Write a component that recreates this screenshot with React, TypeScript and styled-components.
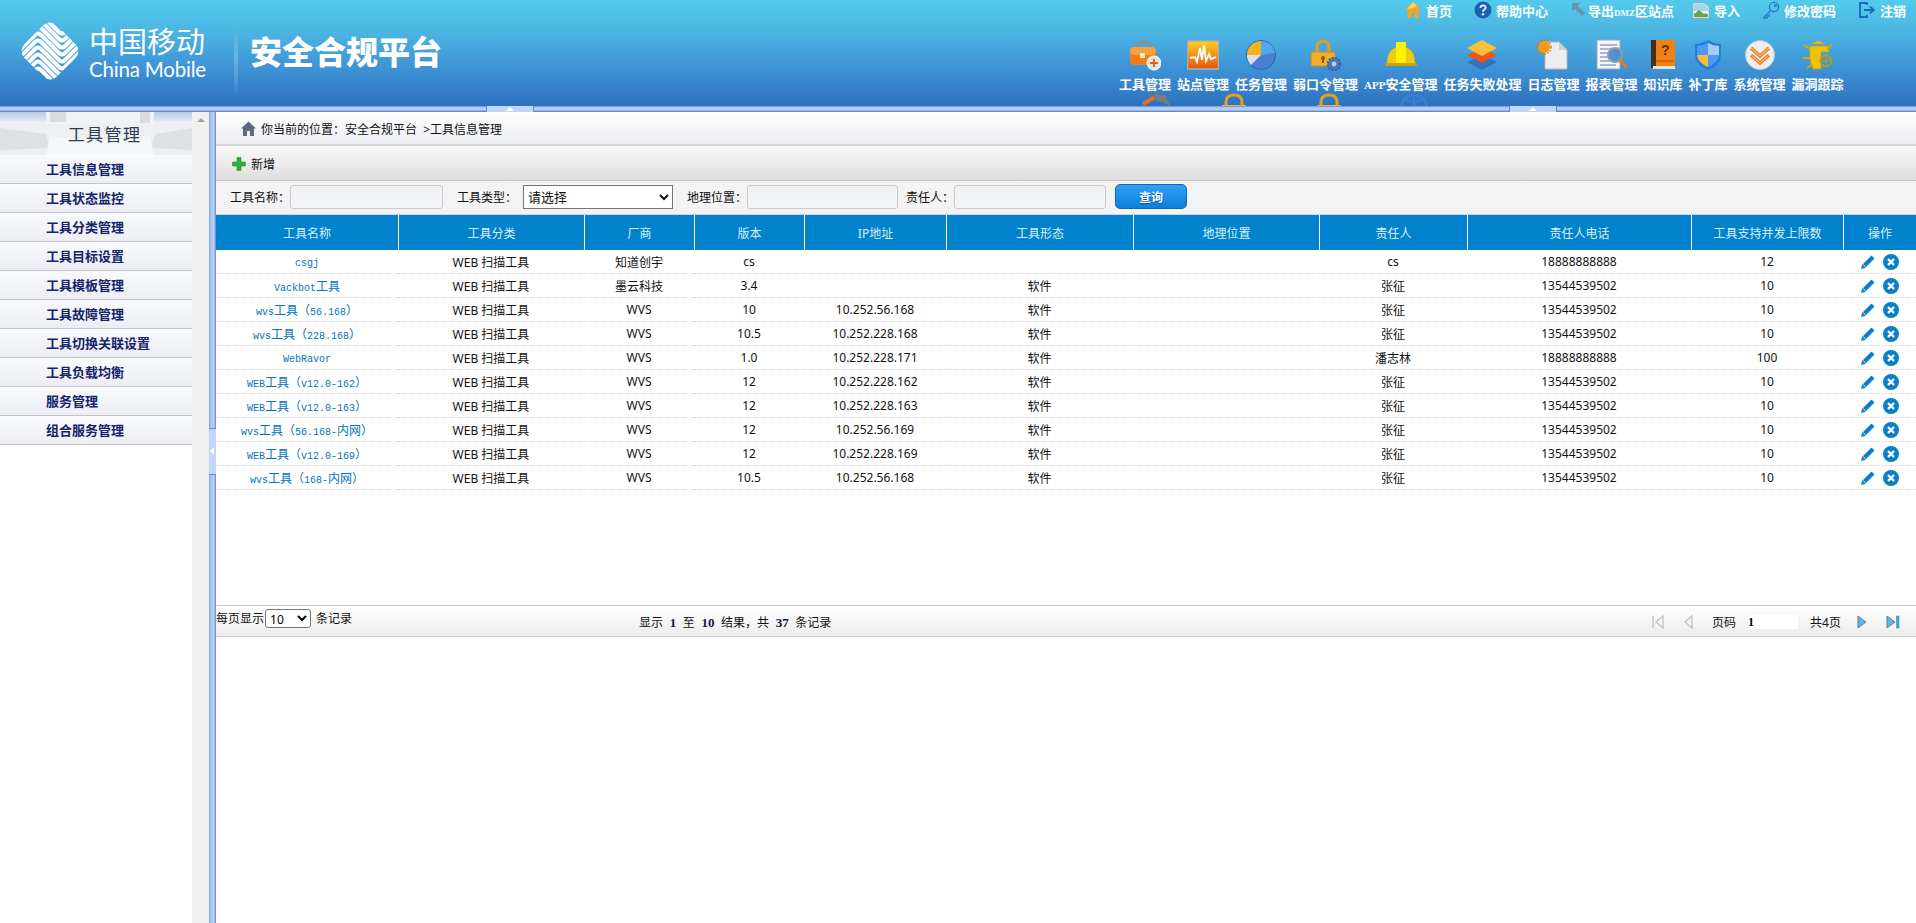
import React from "react";
import styled, { createGlobalStyle } from "styled-components";

const CJK = `"Noto Sans", "Noto Sans CJK SC", sans-serif`;

const Global = createGlobalStyle`
  html, body { margin: 0; padding: 0; height: 100%; overflow: hidden; background: #fff; }
  body { font-family: ${CJK}; font-size: 12px; color: #111; }
  * { box-sizing: border-box; }
`;

const Page = styled.div`
  display: flex;
  flex-direction: column;
  width: 1916px;
  height: 923px;
  overflow: hidden;
`;

const Header = styled.header`
  display: flex;
  justify-content: space-between;
  height: 106px;
  flex: none;
  overflow: hidden;
  background: linear-gradient(180deg, #53cbec 0%, #4bb5e3 30%, #3f95d6 62%, #2f70bf 100%);
`;

const Brand = styled.div`
  display: flex;
  align-items: flex-start;
`;

const LogoMark = styled.svg`
  width: 60px;
  height: 60px;
  margin: 21px 0 0 20px;
  flex: none;
`;

const LogoWords = styled.div`
  display: flex;
  flex-direction: column;
  margin: 23px 0 0 9px;
  width: 118px;
  color: #fff;
`;

const LogoCn = styled.div`
  font-family: "Noto Sans CJK SC", sans-serif;
  font-weight: 400;
  font-size: 29px;
  line-height: 34px;
  white-space: nowrap;
`;

const LogoEn = styled.div`
  font-family: Lato, sans-serif;
  font-weight: 400;
  font-size: 20.5px;
  line-height: 24px;
  letter-spacing: -0.2px;
  white-space: nowrap;
`;

const BrandDivider = styled.div`
  width: 4px;
  height: 68px;
  margin: 28px 0 0 27px;
  background: linear-gradient(180deg, rgba(255,255,255,0), rgba(255,255,255,.22) 40%, rgba(255,255,255,.12) 80%, rgba(255,255,255,0));
`;

const Title = styled.h1`
  margin: 28px 0 0 12px;
  font-family: "Noto Sans CJK SC", sans-serif;
  font-size: 32px;
  line-height: 44px;
  font-weight: 900;
  color: #fff;
  white-space: nowrap;
`;

const HeaderRight = styled.div`
  display: flex;
  flex-direction: column;
  align-items: flex-start;
  width: 800px;
`;

const TopLinks = styled.div`
  display: flex;
  align-self: flex-end;
  gap: 22px;
  height: 20px;
  padding-right: 10px;
`;

const TopLink = styled.a<{ $tight?: boolean }>`
  display: flex;
  align-items: center;
  gap: ${(p) => (p.$tight ? 0 : 4)}px;
  margin-right: ${(p) => (p.$tight ? -4 : 0)}px;
  height: 20px;
  font-size: 13px;
  font-weight: 700;
  color: #fff;
  white-space: nowrap;
  font-family: "Noto Sans CJK SC", sans-serif;
`;

const SmallLatin = styled.span<{ $size: number }>`
  font-family: "Liberation Serif", serif;
  font-size: ${(p) => p.$size}px;
`;

const TopIcon = styled.svg`
  width: 18px;
  height: 18px;
  flex: none;
`;

const Nav = styled.nav`
  display: flex;
  gap: 6px;
  margin: 19px 0 0 3px;
`;

const NavItem = styled.a`
  display: flex;
  flex-direction: column;
  align-items: center;
  color: #fff;
  font-family: "Noto Sans CJK SC", sans-serif;
  font-size: 13px;
  font-weight: 700;
  line-height: 18px;
  white-space: nowrap;
`;

const NavIcon = styled.svg`
  width: 32px;
  height: 32px;
  margin-bottom: 4px;
`;

const PeekRow = styled.div`
  display: flex;
  margin-top: -1px;
`;

const Peek = styled.svg<{ $left: number }>`
  width: 30px;
  height: 30px;
  margin-left: ${(p) => p.$left}px;
  flex: none;
`;

const HBar = styled.div`
  position: relative;
  height: 6px;
  flex: none;
  background: linear-gradient(180deg, #7e9fdd 0, #7e9fdd 1px, #a9c8f5 1px, #b4d0f7 4px, #7d97d6 5px, #5f6fae 6px);
`;

const HHandle = styled.div<{ $left: number }>`
  position: absolute;
  top: 0;
  left: ${(p) => p.$left}px;
  width: 48px;
  height: 6px;
  background: #c0d6f7;
  border-left: 1px solid #6f86c6;
  border-right: 1px solid #6f86c6;
  &::after {
    content: "";
    position: absolute;
    left: 19px;
    top: 1px;
    border-left: 4px solid transparent;
    border-right: 4px solid transparent;
    border-bottom: 4px solid #fff;
  }
`;

const Body = styled.div`
  display: flex;
  flex: 1;
  min-height: 0;
`;

const Sidebar = styled.aside`
  width: 192px;
  flex: none;
  background: #fff;
`;

const SideTitle = styled.div`
  position: relative;
  height: 43px;
  display: flex;
  align-items: center;
  justify-content: center;
  overflow: hidden;
  background: #f2f4f7;
  font-family: "Noto Sans CJK SC", sans-serif;
  font-size: 17px;
  letter-spacing: 1.4px;
  color: #2c3c55;
`;

const SideArt = styled.svg`
  position: absolute;
  inset: 0;
  width: 192px;
  height: 43px;
`;

const SideTitleText = styled.span`
  position: relative;
  margin-top: -1px;
  padding-left: 17px;
`;

const SideItem = styled.a`
  display: block;
  height: 29px;
  padding-left: 46px;
  line-height: 27px;
  font-size: 13px;
  font-weight: 700;
  font-family: "Noto Sans CJK SC", sans-serif;
  color: #14236a;
  background: linear-gradient(180deg, #f9fafe, #eceef3);
  border-bottom: 1px solid #c4c4c8;
`;

const ScrollStrip = styled.div`
  width: 17px;
  flex: none;
  background: #f0f0f0;
  display: flex;
  justify-content: center;
  padding-top: 6px;
`;

const ScrollUp = styled.div`
  width: 0;
  height: 0;
  border-left: 4px solid transparent;
  border-right: 4px solid transparent;
  border-bottom: 4px solid #a3a3a3;
`;

const VBar = styled.div`
  position: relative;
  width: 7px;
  flex: none;
  background: linear-gradient(90deg, #7e9fdd 0, #a9c8f5 2px, #b4d0f7 5px, #6a7cc0 7px);
`;

const VHandle = styled.div`
  position: absolute;
  top: 316px;
  left: 0;
  width: 7px;
  height: 47px;
  background: #c0d6f7;
  border-top: 1px solid #6f86c6;
  border-bottom: 1px solid #6f86c6;
  &::after {
    content: "";
    position: absolute;
    left: 1px;
    top: 18px;
    border-top: 4px solid transparent;
    border-bottom: 4px solid transparent;
    border-right: 4px solid #fff;
  }
`;

const Content = styled.main`
  flex: 1;
  min-width: 0;
  display: flex;
  flex-direction: column;
`;

const Crumbs = styled.div`
  display: flex;
  align-items: center;
  gap: 5px;
  height: 34px;
  flex: none;
  padding: 1px 0 0 25px;
  background: linear-gradient(180deg, #fff, #ecedf1);
  border-bottom: 2px solid #d6d6d9;
  font-size: 12px;
  white-space: pre;
`;

const HomeIcon = styled.svg`
  width: 15px;
  height: 15px;
`;

const Toolbar = styled.div`
  display: flex;
  align-items: center;
  gap: 5px;
  height: 35px;
  flex: none;
  padding: 1px 0 0 16px;
  background: linear-gradient(180deg, #f8f8f8, #dedede);
  border-bottom: 1px solid #c9c9c9;
`;

const PlusIcon = styled.svg`
  width: 14px;
  height: 14px;
`;

const SearchRow = styled.form`
  display: flex;
  align-items: center;
  height: 34px;
  flex: none;
  margin: 0;
  padding: 0 0 1px 14px;
  background: #f3f3f3;
  border-bottom: 1px solid #d4d4d4;
`;

const Field = styled.label<{ $ml: number; $gap?: number }>`
  display: flex;
  align-items: center;
  gap: ${(p) => p.$gap ?? 0}px;
  margin-left: ${(p) => p.$ml}px;
  white-space: nowrap;
  font-size: 12px;
`;

const TextInput = styled.input<{ $w: number }>`
  width: ${(p) => p.$w}px;
  height: 24px;
  margin: 0;
  padding: 0 4px;
  background: linear-gradient(180deg, #eff0f3, #f4f5f8);
  border: 1px solid #c9c9c9;
  border-radius: 3px;
`;

const TypeSelect = styled.select`
  width: 150px;
  height: 24px;
  margin: 0;
  background: #fff;
  font-family: ${CJK};
  font-size: 13px;
  color: #111;
  border: 1px solid #767676;
`;

const QueryButton = styled.button`
  width: 72px;
  height: 25px;
  margin: -1px 0 0 9px;
  padding: 0;
  font-family: "Noto Sans CJK SC", sans-serif;
  font-size: 12px;
  font-weight: 700;
  color: #fff;
  text-shadow: 0 1px 1px #064a85;
  background: linear-gradient(180deg, #2fa0f5, #0c7fdb);
  border: 1px solid #0d69b8;
  border-radius: 5px;
`;

const TableArea = styled.div`
  height: 390px;
  flex: none;
  background: #fff;
`;

const Grid = styled.table`
  width: 1700px;
  border-collapse: separate;
  border-spacing: 0;
  table-layout: fixed;
`;

const Th = styled.th`
  height: 35px;
  padding: 0;
  font-weight: 400;
  font-size: 12px;
  color: #d9f0fa;
  background: #0082cc;
  border-left: 1px solid #fff;
  &:first-child { border-left: 0; }
`;

const Td = styled.td`
  height: 24px;
  padding: 0;
  text-align: center;
  font-size: 12px;
  color: #111;
  border-bottom: 1px dotted #cfcfcf;
  white-space: nowrap;
`;

const ToolName = styled.a`
  font-family: "Liberation Mono", monospace;
  font-size: 10px;
  color: #0672bb;
`;

const NameCjk = styled.span`
  font-family: "Noto Sans CJK SC", sans-serif;
  font-size: 12px;
`;

const Actions = styled.div`
  display: flex;
  justify-content: center;
  align-items: center;
  gap: 7px;
  padding-right: 1px;
`;

const ActionIcon = styled.svg`
  width: 16px;
  height: 16px;
`;

const Footer = styled.div`
  display: flex;
  align-items: center;
  position: relative;
  height: 32px;
  flex: none;
  background: linear-gradient(180deg, #fff, #ececec);
  border-top: 1px solid #c9c9c9;
  border-bottom: 1px solid #c9c9c9;
  font-size: 12px;
`;

const PerPage = styled.div`
  display: flex;
  align-items: center;
  width: 423px;
  margin-top: -6px;
`;

const PerSelect = styled.select`
  width: 46px;
  height: 19px;
  margin: 0 5px 0 1px;
  padding: 0;
  font-family: "Noto Sans", sans-serif;
  font-size: 12px;
  background: #fff;
  border: 1px solid #767676;
  border-radius: 3px;
`;

const Summary = styled.div`
  width: 1012px;
  white-space: pre;
  padding-top: 2px;
`;

const Num = styled.b`
  margin: 0 3.5px;
  font-family: "Liberation Serif", serif;
  font-size: 13px;
  color: #14143c;
`;

const Pager = styled.div`
  display: flex;
  align-items: center;
  padding-top: 2px;
`;

const PagerIcon = styled.svg<{ $ml: number }>`
  width: 14px;
  height: 16px;
  margin-left: ${(p) => p.$ml}px;
  flex: none;
`;

const PageInput = styled.input`
  width: 50px;
  height: 14px;
  margin: 0 12px;
  padding: 0;
  border: 0;
  background: #fff;
  font-family: "Liberation Serif", serif;
  font-size: 12px;
  font-weight: 700;
`;

const PagerText = styled.span<{ $ml: number }>`
  margin-left: ${(p) => p.$ml}px;
  white-space: nowrap;
`;

const Rest = styled.div`
  flex: 1;
  background: #fff;
`;

const wave = (dy: number) =>
  `M-6 ${42 + dy} L15 ${21 + dy} Q18 ${18 + dy} 21 ${21 + dy} L39 ${39 + dy} Q42 ${42 + dy} 45 ${39 + dy} L66 ${18 + dy}`;

const ChinaMobileLogo = () => (
  <LogoMark viewBox="0 0 60 60" fill="none" stroke="#fff">
    <defs>
      <clipPath id="logoClip">
        <rect x="7" y="7" width="46" height="46" rx="10" transform="rotate(45 30 30)" />
      </clipPath>
    </defs>
    <g clipPath="url(#logoClip)" strokeWidth="4">
      {[-28, -21, -14, -7, 0, 7, 14, 21, 28].map((dy) => (
        <path key={dy} d={wave(dy)} />
      ))}
    </g>
  </LogoMark>
);

const IconHome = () => (
  <TopIcon viewBox="0 0 18 18">
    <path fill="#f6a51f" d="M9 1 L17 9 L14.5 9 L14.5 17 L10.5 17 L10.5 12 L7.5 12 L7.5 17 L3.5 17 L3.5 9 L1 9 Z" />
    <path fill="#fbd25b" d="M9 1 L13 5 L9 7 L3 8 Z" />
  </TopIcon>
);
const IconHelp = () => (
  <TopIcon viewBox="0 0 18 18">
    <circle cx="9" cy="9" r="8.5" fill="#1d5fb5" />
    <path d="M6.4 7 Q6.6 4.4 9.2 4.4 Q11.8 4.6 11.6 6.8 Q11.4 8 9.8 8.9 Q9 9.4 9 10.8" fill="none" stroke="#e8f1fb" strokeWidth="1.8" />
    <circle cx="9" cy="13.3" r="1.2" fill="#e8f1fb" />
  </TopIcon>
);
const IconExport = () => (
  <TopIcon viewBox="0 0 18 18">
    <path fill="#6e8fb4" d="M2 2 L10 2 L7.6 4.8 L15 12 L12 15 L4.8 7.6 L2 10 Z" />
  </TopIcon>
);
const IconImport = () => (
  <TopIcon viewBox="0 0 18 18">
    <path fill="#f2f5f6" stroke="#9aa6ad" strokeWidth=".7" d="M1 2 L12 2 L17 6 L17 17 L1 17 Z" />
    <path fill="#a7d3ee" d="M2 3 H12 L16 6.4 V10 H2 Z" />
    <path fill="#64a744" d="M2 16 L2 13 L7 9 L12 13 L14 12 L16 14 L16 16 Z" />
  </TopIcon>
);
const IconKey = () => (
  <TopIcon viewBox="0 0 18 18" fill="none" stroke="#2a78cc" strokeWidth="1.3">
    <circle cx="12" cy="6" r="4.6" />
    <path d="M8.6 9.4 L2 16 L2 17 L5 17 L5 15 L7 15 L7 13" />
    <circle cx="13.4" cy="4.6" r="1" />
  </TopIcon>
);
const IconLogout = () => (
  <TopIcon viewBox="0 0 18 18" fill="none" stroke="#2266bf" strokeWidth="1.9">
    <path d="M9 4 L9 2 L2 2 L2 16 L9 16 L9 14" />
    <path d="M6 9 L15 9 M12 5.6 L16 9 L12 12.4" />
  </TopIcon>
);

const GTool = () => (
  <NavIcon viewBox="0 0 32 32">
    <path d="M9 9 V5 Q9 3 11 3 H19 Q21 3 21 5 V9" fill="none" stroke="#a58465" strokeWidth="1.5" />
    <rect x="1" y="8" width="26" height="18" rx="4" fill="#ef7f12" />
    <rect x="1" y="8" width="26" height="8" rx="4" fill="#f6a13d" />
    <rect x="11" y="14" width="5" height="5" fill="#ffe4c0" />
    <circle cx="25" cy="24" r="7" fill="#e4e4e4" stroke="#fff" />
    <path d="M25 20 V28 M21 24 H29" stroke="#e8601a" strokeWidth="2" />
  </NavIcon>
);
const GSite = () => (
  <NavIcon viewBox="0 0 32 32">
    <defs>
      <linearGradient id="gSite" x1="0" y1="0" x2="0" y2="1">
        <stop offset="0" stopColor="#ffd21f" />
        <stop offset="1" stopColor="#e8500c" />
      </linearGradient>
    </defs>
    <rect x="0.5" y="2" width="31" height="28" fill="url(#gSite)" stroke="#a9aeb3" strokeWidth="1.6" />
    <path d="M3 19 L8 18 L10 23 L13 9 L15 21 L17 6 L19 22 L22 15 L24 20 L29 18" fill="none" stroke="#fff" strokeWidth="1.8" />
  </NavIcon>
);
const GPie = () => (
  <NavIcon viewBox="0 0 32 32">
    <circle cx="16" cy="16" r="14.5" fill="#4a7fd6" stroke="#1f66b2" strokeWidth="1" />
    <path d="M16 16 L16 2 A14 14 0 0 0 2 16 Z" fill="#f7b21d" />
    <path d="M16 16 L2 16 A14 14 0 0 0 6 26 Z" fill="#dfdfdf" />
    <path d="M16 16 L16 2 A14 14 0 0 1 30 14 Z" fill="#55a5ef" />
  </NavIcon>
);
const GLock = () => (
  <NavIcon viewBox="0 0 32 32">
    <path d="M7 14 V8 Q7 2 13 2 Q19 2 19 8 V14" fill="none" stroke="#e3a11a" strokeWidth="3" />
    <rect x="1" y="13" width="24" height="14" rx="1.5" fill="#f2ae2a" stroke="#cc8a10" />
    <circle cx="13" cy="19" r="2" fill="#8c5c05" />
    <rect x="12" y="19" width="2" height="5" fill="#8c5c05" />
    <circle cx="24" cy="25" r="6" fill="#4d78b8" />
    <circle cx="24" cy="25" r="6.4" fill="none" stroke="#2c5aa0" strokeWidth="1.6" strokeDasharray="2 1.4" />
    <circle cx="24" cy="25" r="2.4" fill="#b8cfe9" />
  </NavIcon>
);
const GHat = () => (
  <NavIcon viewBox="0 0 32 32">
    <path d="M2 24 Q2 9 16 7 Q30 9 30 24 Z" fill="#efca0d" />
    <rect x="11" y="3" width="10" height="21" rx="1" fill="#fff200" />
    <rect x="0" y="24" width="32" height="3" rx="1.5" fill="#caa209" />
  </NavIcon>
);
const GStack = () => (
  <NavIcon viewBox="0 0 32 32">
    <path d="M16 16 L31 23 L16 31 L1 23 Z" fill="#2c74c4" />
    <path d="M16 9 L31 16 L16 24 L1 16 Z" fill="#f0531c" />
    <path d="M16 1 L31 9 L16 17 L1 9 Z" fill="#f6c13a" />
  </NavIcon>
);
const GLog = () => (
  <NavIcon viewBox="0 0 32 32">
    <path d="M8 3 L22 3 L30 11 L30 30 L8 30 Z" fill="#eeeeee" stroke="#b9b9b9" />
    <path d="M22 3 L22 11 L30 11 Z" fill="#cfcfcf" />
    <circle cx="7" cy="8" r="6" fill="#f29b15" />
    <circle cx="7" cy="8" r="7" fill="none" stroke="#d7700d" strokeWidth="1.4" strokeDasharray="1.6 1.4" />
  </NavIcon>
);
const GReport = () => (
  <NavIcon viewBox="0 0 32 32">
    <rect x="1" y="1" width="23" height="29" fill="#f4f6fa" stroke="#9ea6b0" />
    <path d="M4 6 H21 M4 10 H21 M4 14 H14 M4 18 H12 M4 22 H14 M4 26 H20" stroke="#8fa3c9" strokeWidth="1.4" />
    <circle cx="19" cy="16" r="7" fill="#4d91d8" stroke="#9b9b9b" strokeWidth="2" />
    <path d="M24 21 L31 29" stroke="#e27c1a" strokeWidth="3" />
  </NavIcon>
);
const GBookMark = styled.text`
  font-family: "Liberation Sans", sans-serif;
  font-size: 14px;
  font-weight: 700;
  fill: #54310f;
`;
const GBook = () => (
  <NavIcon viewBox="0 0 32 32">
    <rect x="4" y="1" width="5" height="28" fill="#4a2c1f" />
    <rect x="9" y="1" width="19" height="26" fill="#f08112" />
    <rect x="6" y="27" width="22" height="3" fill="#e8e3dd" />
    <rect x="9" y="21" width="17" height="2" fill="#c9680a" />
    <GBookMark x="14" y="16">?</GBookMark>
  </NavIcon>
);
const GShield = () => (
  <NavIcon viewBox="0 0 32 32">
    <path d="M16 1 Q22 5 29 5 V16 Q29 26 16 31 Q3 26 3 16 V5 Q10 5 16 1 Z" fill="#1f7fe0" />
    <path d="M16 4 Q21 7 27 7 V16 H16 Z" fill="#a5cbf6" />
    <path d="M16 4 Q11 7 5 7 V16 H16 Z" fill="#4b9cf0" />
    <path d="M5 16 H16 V28 Q6 24 5 16 Z" fill="#f8bc3c" />
    <path d="M27 16 H16 V28 Q26 24 27 16 Z" fill="#4b9cf0" />
  </NavIcon>
);
const GSys = () => (
  <NavIcon viewBox="0 0 32 32">
    <circle cx="16" cy="16" r="14.5" fill="#eeeeee" stroke="#c6c6c6" />
    <path d="M7 9 L16 17 L25 9 M7 16 L16 24 L25 16" fill="none" stroke="#ee6d1c" strokeWidth="3.4" />
    <path d="M7 9 L16 17 L25 9 M7 16 L16 24 L25 16" fill="none" stroke="#fbc75f" strokeWidth="1.1" />
  </NavIcon>
);
const GBug = () => (
  <NavIcon viewBox="0 0 32 32">
    <path d="M10 5 Q16 -1 22 5 Z" fill="#eab308" />
    <path d="M8 7 H26 L27 13 H19 V30 H11 Q7 24 8 7 Z" fill="#efc206" stroke="#c59a04" strokeWidth=".6" />
    <path d="M1 19 H8 M2 6 L8 10 M30 5 L25 10 M5 29 L11 25" stroke="#d7a800" strokeWidth="2" />
    <circle cx="24" cy="22" r="5.5" fill="none" stroke="#c79b09" strokeWidth="1.5" />
    <path d="M24 15 V29 M17 22 H31" stroke="#c79b09" strokeWidth="1.2" />
  </NavIcon>
);

const navItems: [React.ReactNode, React.FC][] = [
  ["工具管理", GTool], ["站点管理", GSite], ["任务管理", GPie], ["弱口令管理", GLock],
  [<span><SmallLatin $size={11}>APP</SmallLatin>安全管理</span>, GHat], ["任务失败处理", GStack], ["日志管理", GLog], ["报表管理", GReport],
  ["知识库", GBook], ["补丁库", GShield], ["系统管理", GSys], ["漏洞跟踪", GBug],
];

const topLinks: [React.ReactNode, React.FC, boolean?][] = [
  ["首页", IconHome], ["帮助中心", IconHelp], [<span>导出<SmallLatin $size={9}>DMZ</SmallLatin>区站点</span>, IconExport, true],
  ["导入", IconImport], ["修改密码", IconKey], ["注销", IconLogout],
];

const sideItems = ["工具信息管理", "工具状态监控", "工具分类管理", "工具目标设置", "工具模板管理", "工具故障管理", "工具切换关联设置", "工具负载均衡", "服务管理", "组合服务管理"];

const columns: [string, number][] = [
  ["工具名称", 182], ["工具分类", 186], ["厂商", 110], ["版本", 110], ["IP地址", 142], ["工具形态", 187],
  ["地理位置", 186], ["责任人", 148], ["责任人电话", 224], ["工具支持并发上限数", 152], ["操作", 73],
];

const S = "WEB 扫描工具";
const Z = "张征";
const P = "13544539502";
const rows = [
  ["csgj", S, "知道创宇", "cs", "", "", "", "cs", "18888888888", "12"],
  ["Vackbot工具", S, "墨云科技", "3.4", "", "软件", "", Z, P, "10"],
  ["wvs工具（56.168）", S, "WVS", "10", "10.252.56.168", "软件", "", Z, P, "10"],
  ["wvs工具（228.168）", S, "WVS", "10.5", "10.252.228.168", "软件", "", Z, P, "10"],
  ["WebRavor", S, "WVS", "1.0", "10.252.228.171", "软件", "", "潘志林", "18888888888", "100"],
  ["WEB工具（v12.0-162）", S, "WVS", "12", "10.252.228.162", "软件", "", Z, P, "10"],
  ["WEB工具（v12.0-163）", S, "WVS", "12", "10.252.228.163", "软件", "", Z, P, "10"],
  ["wvs工具（56.168-内网）", S, "WVS", "12", "10.252.56.169", "软件", "", Z, P, "10"],
  ["WEB工具（v12.0-169）", S, "WVS", "12", "10.252.228.169", "软件", "", Z, P, "10"],
  ["wvs工具（168-内网）", S, "WVS", "10.5", "10.252.56.168", "软件", "", Z, P, "10"],
];

const renderName = (name: string) =>
  name.split(/([\u4e00-\u9fff\uff00-\uffef]+)/).map((part, i) =>
    i % 2 === 1 ? <NameCjk key={i}>{part}</NameCjk> : <span key={i}>{part}</span>
  );

const EditIcon = () => (
  <ActionIcon viewBox="0 0 16 16">
    <path fill="#0b7fc7" d="M11.5 1.5 L14.5 4.5 L5 14 L1 15 L2 11 Z" />
    <path stroke="#fff" strokeWidth=".8" d="M3 10.5 L5.5 13" />
  </ActionIcon>
);
const DeleteIcon = () => (
  <ActionIcon viewBox="0 0 16 16">
    <circle cx="8" cy="8" r="8" fill="#0b7fc7" />
    <path d="M5 5 L11 11 M11 5 L5 11" stroke="#fff" strokeWidth="2.4" />
  </ActionIcon>
);

export default function App() {
  return (
    <Page>
      <Global />
      <Header>
        <Brand>
          <ChinaMobileLogo />
          <LogoWords>
            <LogoCn>中国移动</LogoCn>
            <LogoEn>China Mobile</LogoEn>
          </LogoWords>
          <BrandDivider />
          <Title>安全合规平台</Title>
        </Brand>
        <HeaderRight>
          <TopLinks>
            {topLinks.map(([label, Icon, tight], i) => (
              <TopLink key={i} $tight={tight}><Icon />{label}</TopLink>
            ))}
          </TopLinks>
          <Nav>
            {navItems.map(([label, Icon], i) => (
              <NavItem key={i}><Icon />{label}</NavItem>
            ))}
          </Nav>
          <PeekRow>
            <Peek $left={25} viewBox="0 0 30 30">
              <path d="M2 11 L14 4" stroke="#e2701c" strokeWidth="4" />
              <path d="M12 1 L24 2 L30 14 L22 9 L14 7 Z" fill="#7c7c7c" />
            </Peek>
            <Peek $left={48} viewBox="0 0 30 30">
              <path d="M7 14 V9 Q7 2 15 2 Q23 2 23 9 V14" fill="none" stroke="#e3a11a" strokeWidth="3" />
              <rect x="3" y="12" width="24" height="14" fill="#f2ae2a" />
            </Peek>
            <Peek $left={65} viewBox="0 0 30 30">
              <path d="M7 14 V9 Q7 2 15 2 Q23 2 23 9 V14" fill="none" stroke="#e3a11a" strokeWidth="3" />
              <rect x="3" y="12" width="24" height="14" fill="#f2ae2a" />
            </Peek>
            <Peek $left={55} viewBox="0 0 30 30">
              <circle cx="15" cy="15" r="13" fill="none" stroke="#3f7fd3" strokeWidth="2" />
              <path d="M2 15 H28 M15 2 V28 M6 6 Q15 12 24 6" fill="none" stroke="#3f7fd3" strokeWidth="2" />
            </Peek>
          </PeekRow>
        </HeaderRight>
      </Header>
      <HBar>
        <HHandle $left={486} />
        <HHandle $left={1509} />
      </HBar>
      <Body>
        <Sidebar>
          <SideTitle>
            <SideArt viewBox="0 0 192 43" preserveAspectRatio="none">
              <defs>
                <linearGradient id="sideBand" x1="0" y1="0" x2="0" y2="1">
                  <stop offset="0" stopColor="#b9c9e4" />
                  <stop offset="1" stopColor="#e3e8f0" />
                </linearGradient>
              </defs>
              <rect x="0" y="0" width="192" height="43" fill="#edeff2" />
              <rect x="0" y="0" width="46" height="9" fill="url(#sideBand)" />
              <rect x="154" y="0" width="38" height="9" fill="url(#sideBand)" />
              <rect x="46" y="0" width="108" height="12" fill="#f1f2f3" />
              <path d="M50 0 H66 V10 H50 Z M140 0 H150 V11 H140 Z" fill="#d9dcdf" />
              <path d="M0 16 L46 22 L50 36 L0 38 Z" fill="#dee1e4" />
              <path d="M192 16 L156 22 L150 36 L192 38 Z" fill="#dee1e4" />
              <path d="M50 24 Q100 32 150 24 L154 43 H46 Z" fill="#f6f7f8" />
            </SideArt>
            <SideTitleText>工具管理</SideTitleText>
          </SideTitle>
          {sideItems.map((item) => <SideItem key={item}>{item}</SideItem>)}
        </Sidebar>
        <ScrollStrip><ScrollUp /></ScrollStrip>
        <VBar><VHandle /></VBar>
        <Content>
          <Crumbs>
            <HomeIcon viewBox="0 0 15 15">
              <path fill="#5b6b7d" d="M7.5 0.5 L15 7.5 L13 7.5 L13 15 L9 15 L9 10 L6 10 L6 15 L2 15 L2 7.5 L0 7.5 Z" />
            </HomeIcon>
            {"你当前的位置：安全合规平台  >工具信息管理"}
          </Crumbs>
          <Toolbar>
            <PlusIcon viewBox="0 0 14 14">
              <path fill="#2fae3a" stroke="#1c8a26" strokeWidth=".5" d="M5 0.5 H9 V5 H13.5 V9 H9 V13.5 H5 V9 H0.5 V5 H5 Z" />
            </PlusIcon>
            新增
          </Toolbar>
          <SearchRow>
            <Field $ml={0}>工具名称：<TextInput $w={153} /></Field>
            <Field $ml={14} $gap={6}>工具类型：<TypeSelect defaultValue=""><option value="">请选择</option></TypeSelect></Field>
            <Field $ml={14}>地理位置：<TextInput $w={151} /></Field>
            <Field $ml={8}>责任人：<TextInput $w={152} /></Field>
            <QueryButton type="button">查询</QueryButton>
          </SearchRow>
          <TableArea>
            <Grid>
              <colgroup>
                {columns.map(([label, w]) => <col key={label} width={w} />)}
              </colgroup>
              <thead>
                <tr>{columns.map(([label]) => <Th key={label}>{label}</Th>)}</tr>
              </thead>
              <tbody>
                {rows.map((r) => (
                  <tr key={r[0]}>
                    <Td><ToolName>{renderName(r[0])}</ToolName></Td>
                    {r.slice(1).map((cell, i) => <Td key={i}>{cell}</Td>)}
                    <Td><Actions><EditIcon /><DeleteIcon /></Actions></Td>
                  </tr>
                ))}
              </tbody>
            </Grid>
          </TableArea>
          <Footer>
            <PerPage>
              每页显示
              <PerSelect defaultValue="10"><option value="10">10</option></PerSelect>
              条记录
            </PerPage>
            <Summary>显示 <Num>1</Num> 至 <Num>10</Num> 结果，共 <Num>37</Num> 条记录</Summary>
            <Pager>
              <PagerIcon $ml={0} viewBox="0 0 14 16" fill="none" stroke="#c4c4c4" strokeWidth="1.4">
                <path d="M2 2 V14 M12 2 L5 8 L12 14 Z" />
              </PagerIcon>
              <PagerIcon $ml={17} viewBox="0 0 14 16" fill="none" stroke="#c4c4c4" strokeWidth="1.4">
                <path d="M10 2 L3 8 L10 14 Z" />
              </PagerIcon>
              <PagerText $ml={16}>页码</PagerText>
              <PageInput defaultValue="1" />
              <span>共4页</span>
              <PagerIcon $ml={14} viewBox="0 0 14 16">
                <path d="M3 2 L11 8 L3 14 Z" fill="#5bb8e6" stroke="#6b7b88" />
              </PagerIcon>
              <PagerIcon $ml={17} viewBox="0 0 14 16">
                <path d="M1 2 L9 8 L1 14 Z" fill="#5bb8e6" stroke="#6b7b88" />
                <rect x="10.5" y="2" width="2.5" height="12" fill="#3fa5dc" stroke="#6b7b88" strokeWidth=".5" />
              </PagerIcon>
            </Pager>
          </Footer>
          <Rest />
        </Content>
      </Body>
    </Page>
  );
}
